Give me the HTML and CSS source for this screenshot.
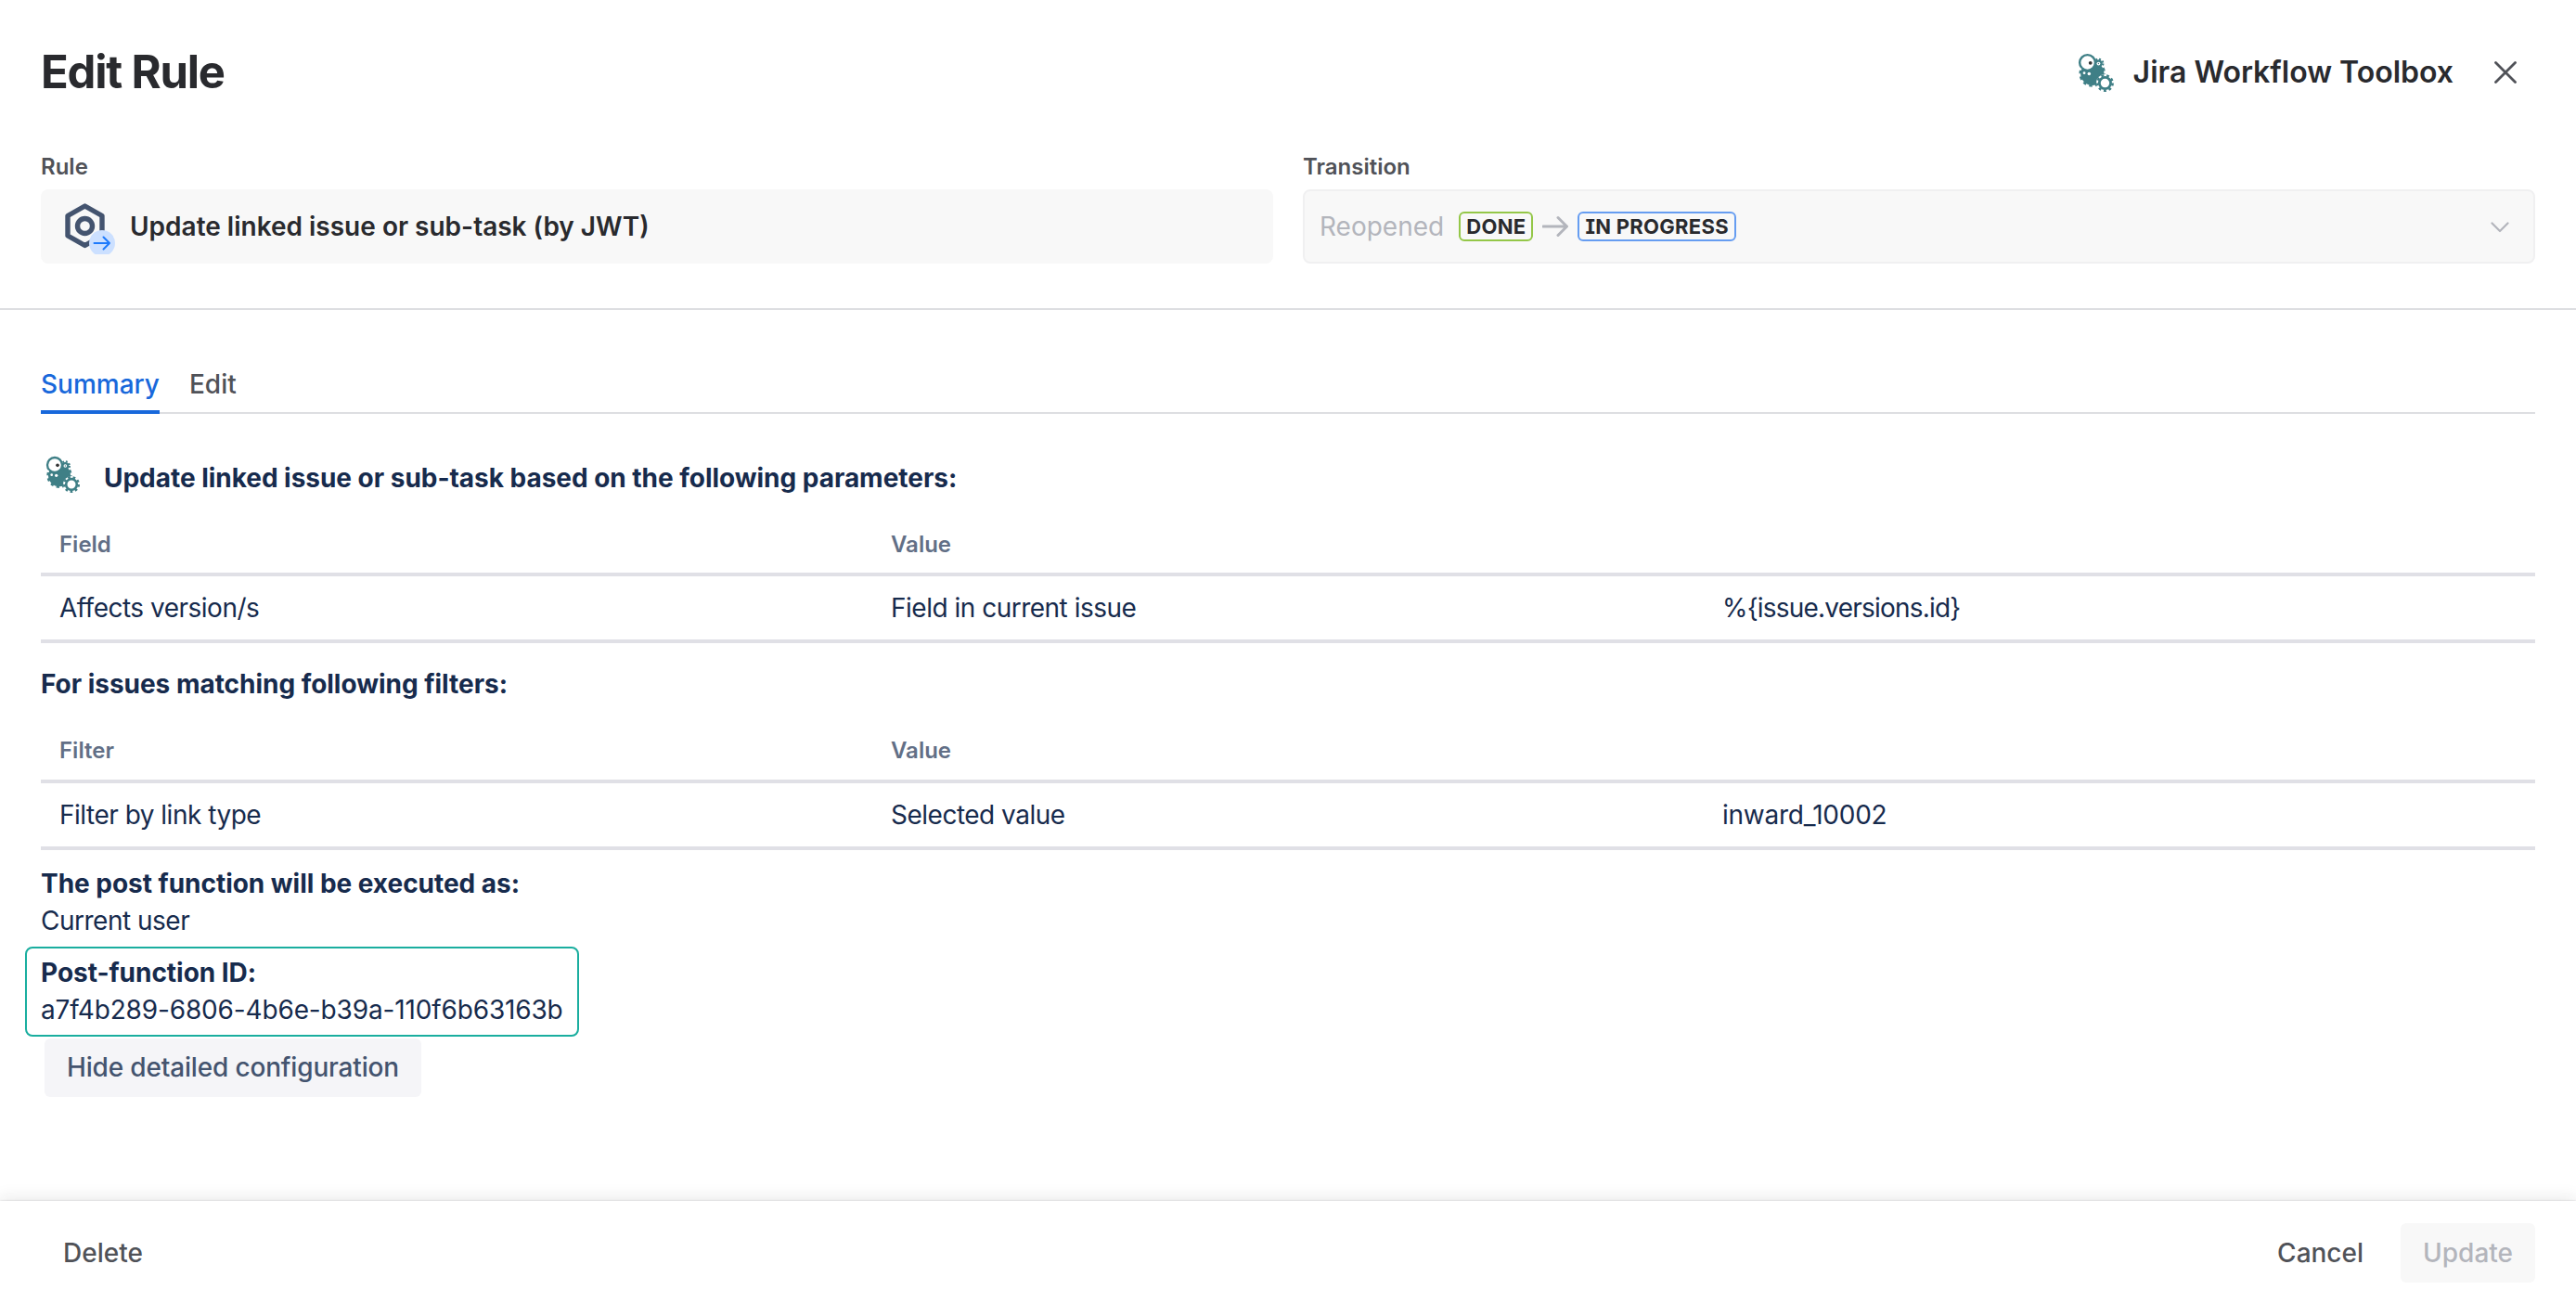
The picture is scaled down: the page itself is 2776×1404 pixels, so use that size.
FILE: index.html
```html
<!DOCTYPE html>
<html lang="en">
<head>
    <meta charset="UTF-8">
    <meta name="viewport" content="width=device-width, initial-scale=1.0">
    <title>Edit Rule</title>
    <link rel="stylesheet" href="styles.css">
</head>
<body>
    <svg width="0" height="0" class="sprite">
        <symbol id="jwt-logo" viewBox="36 24 110 120">
            <circle cx="79" cy="88" r="36" fill="#3f7f86"/>
            <circle cx="79" cy="88" r="37.5" fill="none" stroke="#3f7f86" stroke-width="7" stroke-dasharray="9.8 9.8"/>
            <circle cx="98" cy="57" r="12" fill="#3f7f86"/>
            <circle cx="98" cy="57" r="14" fill="none" stroke="#3f7f86" stroke-width="6" stroke-dasharray="5.5 5.5"/>
            <circle cx="98" cy="57" r="5.5" fill="#fff"/>
            <circle cx="98" cy="57" r="2" fill="#3f7f86"/>
            <circle cx="118" cy="117" r="27" fill="#fff"/>
            <circle cx="118" cy="117" r="17.5" fill="none" stroke="#3f7f86" stroke-width="8"/>
            <circle cx="118" cy="117" r="23.5" fill="none" stroke="#3f7f86" stroke-width="7" stroke-dasharray="8.2 8.2"/>
            <circle cx="64" cy="54" r="24" fill="#fff" stroke="#3f7f86" stroke-width="7"/>
            <circle cx="73" cy="55" r="5.5" fill="#333"/>
            <circle cx="43" cy="74" r="3" fill="#fff"/>
            <circle cx="54" cy="86" r="4" fill="#fff"/>
            <circle cx="69" cy="88" r="5" fill="#fff"/>
        </symbol>
    </svg>

    <div class="header">
        <div class="title-bar">
            <h1>Edit Rule</h1>
            <div class="app-name">
                <svg class="app-logo"><use href="#jwt-logo"/></svg>
                <span>Jira Workflow Toolbox</span>
                <button class="close-button" aria-label="Close">
                    <svg width="24" height="24" viewBox="0 0 24 24"><path d="M1.5 1.5l21 21M22.5 1.5l-21 21" fill="none" stroke="#505258" stroke-width="2.8" stroke-linecap="round"/></svg>
                </button>
            </div>
        </div>
        <div class="fields">
            <div class="field">
                <label>Rule</label>
                <div class="rule-box">
                    <svg class="rule-icon" width="56" height="60" viewBox="0 0 56 60">
                        <path d="M22.5 8L41 18.5V40L22.5 50.5L4 40V18.5Z" fill="none" stroke="#44546f" stroke-width="5.4" stroke-linejoin="round"/>
                        <circle cx="22.5" cy="29.5" r="8" fill="none" stroke="#44546f" stroke-width="5.4"/>
                        <circle cx="41" cy="48" r="14" fill="#cce0ff"/>
                        <path d="M32.5 48H49M42.5 41.5L49 48L42.5 54.5" fill="none" stroke="#1d7afc" stroke-width="2" stroke-linecap="round" stroke-linejoin="round"/>
                    </svg>
                    <span>Update linked issue or sub-task (by JWT)</span>
                </div>
            </div>
            <div class="field">
                <label>Transition</label>
                <div class="select-box">
                    <span class="transition-name">Reopened</span>
                    <span class="tag tag-done">DONE</span>
                    <svg class="arrow" width="28" height="24" viewBox="0 0 28 24"><path d="M1 12H26M17 2.5L26.5 12L17 21.5" fill="none" stroke="#b3b5bc" stroke-width="3" stroke-linecap="round" stroke-linejoin="round"/></svg>
                    <span class="tag tag-progress">IN PROGRESS</span>
                    <svg class="chevron" width="20" height="12" viewBox="0 0 20 12"><path d="M1.5 1.5L10 10L18.5 1.5" fill="none" stroke="#b3b5bc" stroke-width="2.2" stroke-linecap="round" stroke-linejoin="round"/></svg>
                </div>
            </div>
        </div>
    </div>

    <div class="content">
        <div class="tabs">
            <div class="tab active">Summary</div>
            <div class="tab">Edit</div>
        </div>

        <div class="summary-title">
            <svg class="summary-logo"><use href="#jwt-logo"/></svg>
            <h2 class="params-title">Update linked issue or sub-task based on the following parameters:</h2>
        </div>
        <table class="params-table">
            <thead>
                <tr><th>Field</th><th>Value</th><th></th></tr>
            </thead>
            <tbody>
                <tr><td>Affects version/s</td><td>Field in current issue</td><td class="expression">%{issue.versions.id}</td></tr>
            </tbody>
        </table>

        <h2 class="filter-title">For issues matching following filters:</h2>
        <table class="filter-table">
            <thead>
                <tr><th>Filter</th><th>Value</th><th></th></tr>
            </thead>
            <tbody>
                <tr><td>Filter by link type</td><td>Selected value</td><td class="link-type">inward_10002</td></tr>
            </tbody>
        </table>

        <div class="executed-as">
            <h2>The post function will be executed as:</h2>
            <p>Current user</p>
        </div>
        <div class="function-id">
            <h2>Post-function ID:</h2>
            <p>a7f4b289-6806-4b6e-b39a-110f6b63163b</p>
        </div>
        <button class="hide-button">Hide detailed configuration</button>
    </div>

    <div class="footer">
        <button class="delete-button">Delete</button>
        <div class="footer-actions">
            <button>Cancel</button>
            <button class="update-button" disabled>Update</button>
        </div>
    </div>
</body>
</html>
```

FILE: styles.css
```css
* {
    margin: 0;
    padding: 0;
    box-sizing: border-box;
}
body {
    font-family: Inter, "Liberation Sans", sans-serif;
    font-size: 28px;
    line-height: 40px;
    color: #172b4d;
    background-color: #fff;
    height: 100vh;
    display: flex;
    flex-direction: column;
    overflow: hidden;
}
.sprite {
    display: none;
}
svg {
    display: block;
    flex-shrink: 0;
}
button {
    font: inherit;
    font-weight: 500;
    color: #505258;
    background: none;
    border: none;
    border-radius: 6px;
    height: 64px;
    padding: 0 24px;
    cursor: pointer;
}
.header {
    height: 334px;
    padding: 38px 44px 0;
    border-bottom: 2px solid #dddee1;
}
.title-bar {
    display: flex;
    justify-content: space-between;
    align-items: center;
    height: 80px;
}
h1 {
    font-size: 49px;
    font-weight: 700;
    color: #292a2e;
    letter-spacing: -1.2px;
}
.app-name {
    display: flex;
    align-items: center;
    font-size: 32px;
    font-weight: 600;
    color: #292a2e;
}
.app-logo {
    width: 40px;
    height: 42px;
    margin-right: 20px;
}
.close-button {
    display: flex;
    align-items: center;
    padding: 0 20px 0 44px;
}
.fields {
    display: grid;
    grid-template-columns: 1fr 1fr;
    gap: 32px;
    margin-top: 46px;
}
label {
    display: block;
    font-size: 24px;
    font-weight: 600;
    line-height: 32px;
    color: #505258;
    margin-bottom: 8px;
}
.rule-box,
.select-box {
    display: flex;
    align-items: center;
    height: 80px;
    background-color: #f8f8f8;
    border-radius: 8px;
}
.rule-box {
    padding-left: 25px;
    font-weight: 600;
    color: #292a2e;
}
.rule-icon {
    margin-right: 15px;
}
.select-box {
    border: 2px solid #f0f0f1;
    padding: 0 26px 0 16px;
}
.transition-name {
    color: #b3b5bc;
    margin-right: 16px;
}
.tag {
    height: 32px;
    border: 2px solid;
    border-radius: 6px;
    padding: 0 6px;
    font-size: 22px;
    font-weight: 700;
    line-height: 28px;
    letter-spacing: 0.3px;
    color: #292a2e;
    font-feature-settings: "cv08";
}
.tag-done {
    border-color: #94c748;
}
.tag-progress {
    border-color: #669df1;
}
.arrow {
    margin: 0 10px;
}
.chevron {
    margin: 2px 0 0 auto;
}
.content {
    flex: 1;
    padding: 60px 44px 0;
}
.tabs {
    display: flex;
    gap: 32px;
    height: 52px;
    box-shadow: inset 0 -2px #dddee1;
}
.tab {
    font-weight: 500;
    color: #505258;
}
.tab.active {
    color: #1868db;
    border-bottom: 4px solid #1868db;
}
h2 {
    font-size: 28px;
    font-weight: 700;
    line-height: 40px;
    letter-spacing: -0.03px;
}
.summary-title {
    display: flex;
    margin-top: 49px;
}
.summary-logo {
    width: 38px;
    height: 40px;
    margin: -4px 25px 0 5px;
}
.filter-title {
    margin-top: 24px;
}
table {
    width: 100%;
    table-layout: fixed;
    border-collapse: separate;
    border-spacing: 0;
}
th {
    font-size: 24px;
    font-weight: 600;
    line-height: 32px;
    color: #626f86;
    text-align: left;
    padding: 36px 20px 14px;
    border-bottom: 4px solid #e0e0e6;
}
.filter-table th {
    padding-bottom: 15px;
}
td {
    padding: 14px 20px;
    border-bottom: 4px solid #e0e0e6;
    letter-spacing: -0.5px;
}
.expression {
    letter-spacing: -0.8px;
}
.link-type {
    letter-spacing: -0.25px;
}
.executed-as {
    margin-top: 16px;
}
.executed-as p {
    letter-spacing: -0.5px;
}
.function-id {
    width: 597px;
    margin: 8px 0 2px -17px;
    padding: 6px 15px 7px;
    border: 2px solid #1aae9f;
    border-radius: 8px;
    white-space: nowrap;
}
.function-id p {
    letter-spacing: -0.15px;
}
.hide-button {
    display: block;
    height: 63px;
    margin-left: 4px;
    padding-bottom: 2px;
    background-color: #f5f5f8;
    color: #44546f;
    letter-spacing: -0.17px;
}
.footer {
    display: flex;
    justify-content: space-between;
    height: 110px;
    padding: 24px 44px;
    background-color: #fff;
    box-shadow: 0 0 2px rgba(30, 31, 33, 0.2), 0 -4px 16px rgba(30, 31, 33, 0.09);
}
.footer-actions {
    display: flex;
    gap: 16px;
}
.update-button {
    background-color: #f8f8f8;
    color: #b3b5bc;
}
```
